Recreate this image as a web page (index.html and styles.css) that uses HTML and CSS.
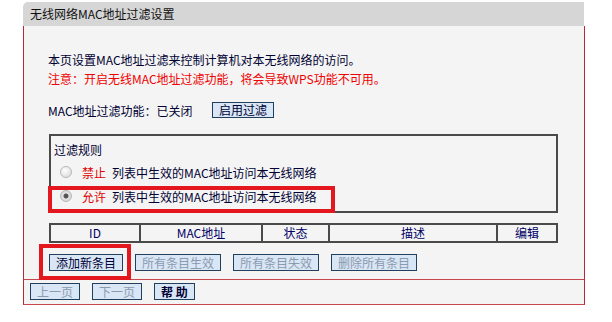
FILE: index.html
```html
<!DOCTYPE html>
<html lang="zh-CN">
<head>
    <meta charset="UTF-8">
    <title>无线网络MAC地址过滤设置</title>
    <link rel="stylesheet" href="styles.css">
</head>
<body>

    <div class="panel">
        <div class="title">无线网络MAC地址过滤设置</div>

        <div class="content">
            <p class="intro">本页设置MAC地址过滤来控制计算机对本无线网络的访问。</p>
            <p class="intro warn">注意：开启无线MAC地址过滤功能，将会导致WPS功能不可用。</p>

            <div class="status-row">
                <span class="status-label">MAC地址过滤功能：已关闭</span>
                <button class="btn">启用过滤</button>
            </div>

            <div class="rules">
                <div class="rules-title">过滤规则</div>
                <label class="rule-row">
                    <input type="radio" name="rule" class="radio">
                    <span class="red">禁止</span>
                    <span class="rule-text">列表中生效的MAC地址访问本无线网络</span>
                </label>
                <label class="rule-row marked">
                    <input type="radio" name="rule" class="radio" checked>
                    <span class="red">允许</span>
                    <span class="rule-text">列表中生效的MAC地址访问本无线网络</span>
                    <span class="highlight row-mark"></span>
                </label>
            </div>

            <table class="list">
                <tr>
                    <th class="col-id">ID</th>
                    <th class="col-mac">MAC地址</th>
                    <th class="col-state">状态</th>
                    <th class="col-desc">描述</th>
                    <th class="col-edit">编辑</th>
                </tr>
            </table>

            <div class="actions">
                <span class="marked">
                    <button class="btn">添加新条目</button>
                    <span class="highlight add-mark"></span>
                </span>
                <button class="btn" disabled>所有条目生效</button>
                <button class="btn" disabled>所有条目失效</button>
                <button class="btn" disabled>删除所有条目</button>
            </div>
        </div>

        <div class="footer">
            <button class="btn" disabled>上一页</button>
            <button class="btn" disabled>下一页</button>
            <button class="btn help">帮 助</button>
        </div>
    </div>

</body>
</html>
```

FILE: styles.css
```css
body {
    margin: 0;
    padding-top: 2px;
    background-color: #FFFFFF;
    font-family: "Noto Sans CJK SC", "DejaVu Sans", sans-serif;
    font-size: 12px;
    color: #000033;
}

.panel {
    width: 562px;
    margin-left: 23px;
}

.title {
    height: 24px;
    line-height: 24px;
    padding-left: 7px;
    margin-right: 1px;
    background-color: #D6D6D6;
    border-top-left-radius: 5px;
    color: #111111;
}

.content {
    background-color: #F4F4F4;
    border-left: 1px solid #B52A30;
    border-right: 1px solid #B52A30;
    border-bottom: 1px solid #C8474C;
    padding: 24px 0 8px 24px;
}

.intro {
    margin: 0;
    line-height: 19px;
}

.warn {
    color: #F00000;
}

.red {
    color: #E00000;
}

.status-row {
    display: flex;
    align-items: center;
    height: 16px;
    margin-top: 14px;
}

.status-label {
    width: 164px;
}

.btn {
    font-family: "Noto Sans CJK SC", "DejaVu Sans", sans-serif;
    font-size: 12px;
    line-height: 15px;
    height: 17px;
    padding: 0 6px;
    margin: 0;
    color: #000033;
    background-color: #D8E6F6;
    border: 1px solid #21405E;
    border-radius: 0;
}

.status-row .btn {
    height: 16px;
    line-height: 14px;
}

.btn:disabled {
    color: #8C9AAE;
}

.rules {
    width: 505px;
    margin: 16px 0 0 1px;
    padding: 4px 0 3px 0;
    border: 2px solid #4A4A4A;
}

.rules-title {
    line-height: 20px;
    padding-left: 3px;
}

.rule-row {
    display: flex;
    align-items: center;
    height: 24px;
    position: relative;
}

.rule-text {
    margin-left: 6px;
}

.radio {
    appearance: none;
    -webkit-appearance: none;
    width: 12px;
    height: 12px;
    margin: 0 10px 0 9px;
    border: 1px solid #B8B8B8;
    border-radius: 50%;
    background: radial-gradient(circle at 40% 35%, #FFFFFF, #D4D4D4);
}

.radio:checked {
    background: radial-gradient(circle, #555555 0, #555555 2px, #E6E6E6 3px, #D0D0D0 6px);
}

.marked {
    position: relative;
}

.highlight {
    position: absolute;
    border: 4px solid #E4161E;
    box-sizing: border-box;
    pointer-events: none;
}

.row-mark {
    left: -3px;
    top: 2px;
    width: 287px;
    height: 27px;
}

.add-mark {
    left: -10px;
    top: -10px;
    width: 92px;
    height: 36px;
}

.list {
    width: 509px;
    margin: 10px 0 0 1px;
    border-collapse: collapse;
}

.list th {
    height: 16px;
    padding: 0;
    font-weight: normal;
    line-height: 16px;
    color: #000066;
    border: 2px solid #4A4A4A;
}

.col-id { width: 88px; }
.col-mac { width: 120px; }
.col-state { width: 65px; }
.col-desc { width: 166px; }

.actions {
    display: flex;
    gap: 12px;
    margin: 11px 0 0 1px;
}

.footer {
    display: flex;
    gap: 12px;
    background-color: #F4F4F4;
    border-left: 1px solid #B52A30;
    border-right: 1px solid #B52A30;
    border-bottom: 1px solid #C8474C;
    padding: 3px 0 4px 6px;
}

.help {
    font-weight: bold;
}
```
